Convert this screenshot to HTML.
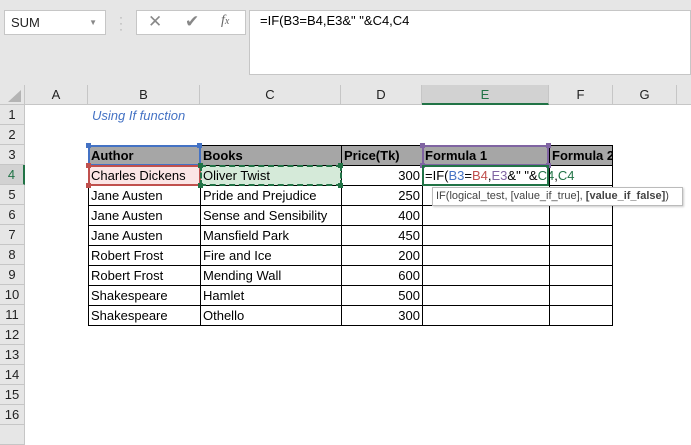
<!DOCTYPE html>
<html><head><meta charset="utf-8"><style>
*{margin:0;padding:0;box-sizing:border-box}
body{width:691px;height:428px;overflow:hidden;background:#fff;font-family:"Liberation Sans",Calibri,sans-serif;position:relative}
.a{position:absolute}
.t{font-size:13px;line-height:20px;white-space:nowrap;overflow:hidden;color:#000}
.ch{position:absolute;top:85px;height:20px;border-right:1px solid #c6c6c6;border-bottom:1px solid #c6c6c6;background:#e6e6e6;text-align:center;font-size:13px;line-height:20px;color:#222}
.rh{position:absolute;left:0;width:25px;height:20px;border-bottom:1px solid #c6c6c6;border-right:1px solid #c6c6c6;background:#e6e6e6;text-align:center;font-size:13px;line-height:20px;color:#222}
.c{position:absolute;height:21px;border:1px solid #000;padding-left:2px;font-size:13px;line-height:19px;white-space:nowrap;overflow:hidden}
</style></head><body>
<div class="a" style="left:0;top:0;width:691px;height:85px;background:#e6e6e6"></div>
<div class="a" style="left:4px;top:10px;width:102px;height:25px;background:#fff;border:1px solid #c6c6c6;font-size:13px;line-height:23px;padding-left:6px;color:#222">SUM<span style="position:absolute;right:8px;top:0;font-size:8px;color:#888">▼</span></div>
<div class="a" style="left:119px;top:14px;color:#aaa;font-size:12px;line-height:6px">·<br>·<br>·</div>
<div class="a" style="left:136px;top:10px;width:110px;height:25px;background:#fff;border:1px solid #c6c6c6"></div>
<div class="a" style="left:148px;top:12px;font-size:17px;color:#888">✕</div>
<div class="a" style="left:185px;top:12px;font-size:17px;color:#888">✔</div>
<div class="a" style="left:221px;top:13px;font-size:14px;color:#666;font-style:italic;font-family:'Liberation Serif',serif">f<span style="font-size:10px">x</span></div>
<div class="a" style="left:249px;top:10px;width:442px;height:65px;background:#fff;border:1px solid #c6c6c6"></div>
<div class="a t" style="left:260px;top:11px">=IF(B3=B4,E3&amp;" "&amp;C4,C4</div>

<div class="a" style="left:0;top:85px;width:25px;height:20px;background:#e6e6e6;border-right:1px solid #c6c6c6;border-bottom:1px solid #c6c6c6"></div>
<div class="a" style="left:8px;top:90px;width:0;height:0;border-left:13px solid transparent;border-bottom:12px solid #b4b4b4"></div>
<div class="ch" style="left:25px;width:63px">A</div>
<div class="ch" style="left:88px;width:112px">B</div>
<div class="ch" style="left:200px;width:141px">C</div>
<div class="ch" style="left:341px;width:81px">D</div>
<div class="ch" style="left:422px;width:127px;background:#d2d2d2;border-bottom:2px solid #217346;color:#217346">E</div>
<div class="ch" style="left:549px;width:64px">F</div>
<div class="ch" style="left:613px;width:64px">G</div>
<div class="ch" style="left:677px;width:20px"></div>

<div class="rh" style="top:105px">1</div><div class="rh" style="top:125px">2</div><div class="rh" style="top:145px">3</div>
<div class="rh" style="top:165px;background:#d2d2d2;border-right:2px solid #217346;color:#217346">4</div>
<div class="rh" style="top:185px">5</div><div class="rh" style="top:205px">6</div><div class="rh" style="top:225px">7</div><div class="rh" style="top:245px">8</div><div class="rh" style="top:265px">9</div><div class="rh" style="top:285px">10</div><div class="rh" style="top:305px">11</div><div class="rh" style="top:325px">12</div><div class="rh" style="top:345px">13</div><div class="rh" style="top:365px">14</div><div class="rh" style="top:385px">15</div><div class="rh" style="top:405px">16</div><div class="rh" style="top:425px"></div>

<div class="a t" style="left:92px;top:106px;color:#4472c4;font-style:italic">Using If function</div>

<div class="c" style="left:88px;top:145px;width:113px;background:#a6a6a6;font-weight:bold">Author</div>
<div class="c" style="left:200px;top:145px;width:142px;background:#a6a6a6;font-weight:bold">Books</div>
<div class="c" style="left:341px;top:145px;width:82px;background:#a6a6a6;font-weight:bold">Price(Tk)</div>
<div class="c" style="left:422px;top:145px;width:128px;background:#a6a6a6;font-weight:bold">Formula 1</div>
<div class="c" style="left:549px;top:145px;width:64px;background:#a6a6a6;font-weight:bold">Formula 2</div>

<div class="c" style="left:88px;top:165px;width:113px;background:#fbe5e5">Charles Dickens</div>
<div class="c" style="left:200px;top:165px;width:142px;background:#d5ead9">Oliver Twist</div>
<div class="c" style="left:341px;top:165px;width:82px;text-align:right;padding-right:2px">300</div>
<div class="c" style="left:422px;top:165px;width:128px;overflow:visible">=IF(<span style="color:#4472c4">B3</span>=<span style="color:#c0504d">B4</span>,<span style="color:#8064a2">E3</span>&amp;" "&amp;<span style="color:#217346">C4</span>,<span style="color:#217346">C4</span></div>
<div class="c" style="left:549px;top:165px;width:64px"></div>

<div class="c" style="left:88px;top:185px;width:113px">Jane Austen</div><div class="c" style="left:200px;top:185px;width:142px">Pride and Prejudice</div><div class="c" style="left:341px;top:185px;width:82px;text-align:right;padding-right:2px">250</div><div class="c" style="left:422px;top:185px;width:128px"></div><div class="c" style="left:549px;top:185px;width:64px"></div>
<div class="c" style="left:88px;top:205px;width:113px">Jane Austen</div><div class="c" style="left:200px;top:205px;width:142px">Sense and Sensibility</div><div class="c" style="left:341px;top:205px;width:82px;text-align:right;padding-right:2px">400</div><div class="c" style="left:422px;top:205px;width:128px"></div><div class="c" style="left:549px;top:205px;width:64px"></div>
<div class="c" style="left:88px;top:225px;width:113px">Jane Austen</div><div class="c" style="left:200px;top:225px;width:142px">Mansfield Park</div><div class="c" style="left:341px;top:225px;width:82px;text-align:right;padding-right:2px">450</div><div class="c" style="left:422px;top:225px;width:128px"></div><div class="c" style="left:549px;top:225px;width:64px"></div>
<div class="c" style="left:88px;top:245px;width:113px">Robert Frost</div><div class="c" style="left:200px;top:245px;width:142px">Fire and Ice</div><div class="c" style="left:341px;top:245px;width:82px;text-align:right;padding-right:2px">200</div><div class="c" style="left:422px;top:245px;width:128px"></div><div class="c" style="left:549px;top:245px;width:64px"></div>
<div class="c" style="left:88px;top:265px;width:113px">Robert Frost</div><div class="c" style="left:200px;top:265px;width:142px">Mending Wall</div><div class="c" style="left:341px;top:265px;width:82px;text-align:right;padding-right:2px">600</div><div class="c" style="left:422px;top:265px;width:128px"></div><div class="c" style="left:549px;top:265px;width:64px"></div>
<div class="c" style="left:88px;top:285px;width:113px">Shakespeare</div><div class="c" style="left:200px;top:285px;width:142px">Hamlet</div><div class="c" style="left:341px;top:285px;width:82px;text-align:right;padding-right:2px">500</div><div class="c" style="left:422px;top:285px;width:128px"></div><div class="c" style="left:549px;top:285px;width:64px"></div>
<div class="c" style="left:88px;top:305px;width:113px">Shakespeare</div><div class="c" style="left:200px;top:305px;width:142px">Othello</div><div class="c" style="left:341px;top:305px;width:82px;text-align:right;padding-right:2px">300</div><div class="c" style="left:422px;top:305px;width:128px"></div><div class="c" style="left:549px;top:305px;width:64px"></div>

<div class="a" style="left:88px;top:145px;width:113px;height:21px;border:2px solid #4472c4"></div>
<div class="a" style="left:86px;top:143px;width:5px;height:5px;background:#4472c4"></div><div class="a" style="left:197px;top:143px;width:5px;height:5px;background:#4472c4"></div>
<div class="a" style="left:88px;top:165px;width:113px;height:21px;border:2px solid #c0504d"></div>
<div class="a" style="left:86px;top:163px;width:5px;height:5px;background:#c0504d"></div><div class="a" style="left:86px;top:183px;width:5px;height:5px;background:#c0504d"></div>
<div class="a" style="left:422px;top:145px;width:127px;height:21px;border:2px solid #8064a2"></div>
<div class="a" style="left:420px;top:143px;width:5px;height:5px;background:#8064a2"></div><div class="a" style="left:546px;top:143px;width:5px;height:5px;background:#8064a2"></div><div class="a" style="left:420px;top:163px;width:5px;height:5px;background:#8064a2"></div><div class="a" style="left:546px;top:163px;width:5px;height:5px;background:#8064a2"></div>
<div class="a" style="left:200px;top:165px;width:142px;height:21px;border:2px dashed #217346"></div>
<div class="a" style="left:198px;top:163px;width:5px;height:5px;background:#217346"></div><div class="a" style="left:338px;top:163px;width:5px;height:5px;background:#217346"></div><div class="a" style="left:198px;top:183px;width:5px;height:5px;background:#217346"></div><div class="a" style="left:338px;top:183px;width:5px;height:5px;background:#217346"></div>
<div class="a" style="left:422px;top:165px;width:127px;height:21px;border:2px solid #217346"></div>

<div class="a" style="left:432px;top:187px;width:251px;height:19px;padding:0 3px;background:#fff;border:1px solid #bbb;box-shadow:1px 1px 2px rgba(0,0,0,.2);font-size:11px;line-height:17px;color:#444;white-space:nowrap;overflow:hidden">IF(logical_test, [value_if_true], <b>[value_if_false]</b>)</div>
</body></html>
